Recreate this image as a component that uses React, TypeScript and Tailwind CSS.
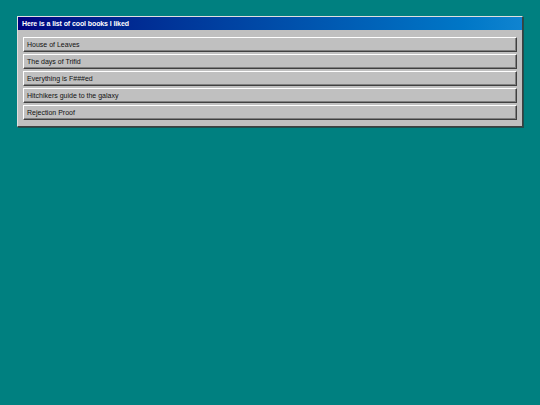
import React from 'react';

const books = [
  'House of Leaves',
  'The days of Trifid',
  'Everything is F###ed',
  'Hitchikers guide to the galaxy',
  'Rejection Proof',
];

const App: React.FC = () => {
  return (
    <div className="min-h-screen w-full bg-[#008080] pt-4 pl-[17px] pr-[17px]" style={{ fontFamily: '"Liberation Sans", Arial, sans-serif' }}>
      {/* Window */}
      <div className="w-[506px] bg-[#c0c0c0] border border-t-[#dfdfdf] border-l-[#dfdfdf] border-r-[#404040] border-b-[#404040] shadow-[1px_1px_0_#1f4f4f]">
        {/* Title bar */}
        <div className="h-[13px] flex items-center px-[4px] bg-gradient-to-r from-[#000080] to-[#1084d0]">
          <span className="text-[7px] leading-none font-bold text-white tracking-[-0.1px]">
            Here is a list of cool books I liked
          </span>
        </div>

        {/* List */}
        <div className="flex flex-col gap-[2px] pt-[7px] pb-[6px] px-[5px]">
          {books.map((book) => (
            <button
              key={book}
              className="h-[15px] w-full flex items-center px-[3px] bg-[#c0c0c0] text-left text-[7px] leading-none text-[#111] border border-t-white border-l-white border-r-[#404040] border-b-[#404040] shadow-[inset_-1px_-1px_0_#808080]"
            >
              {book}
            </button>
          ))}
        </div>
      </div>
    </div>
  );
};

export default App;
